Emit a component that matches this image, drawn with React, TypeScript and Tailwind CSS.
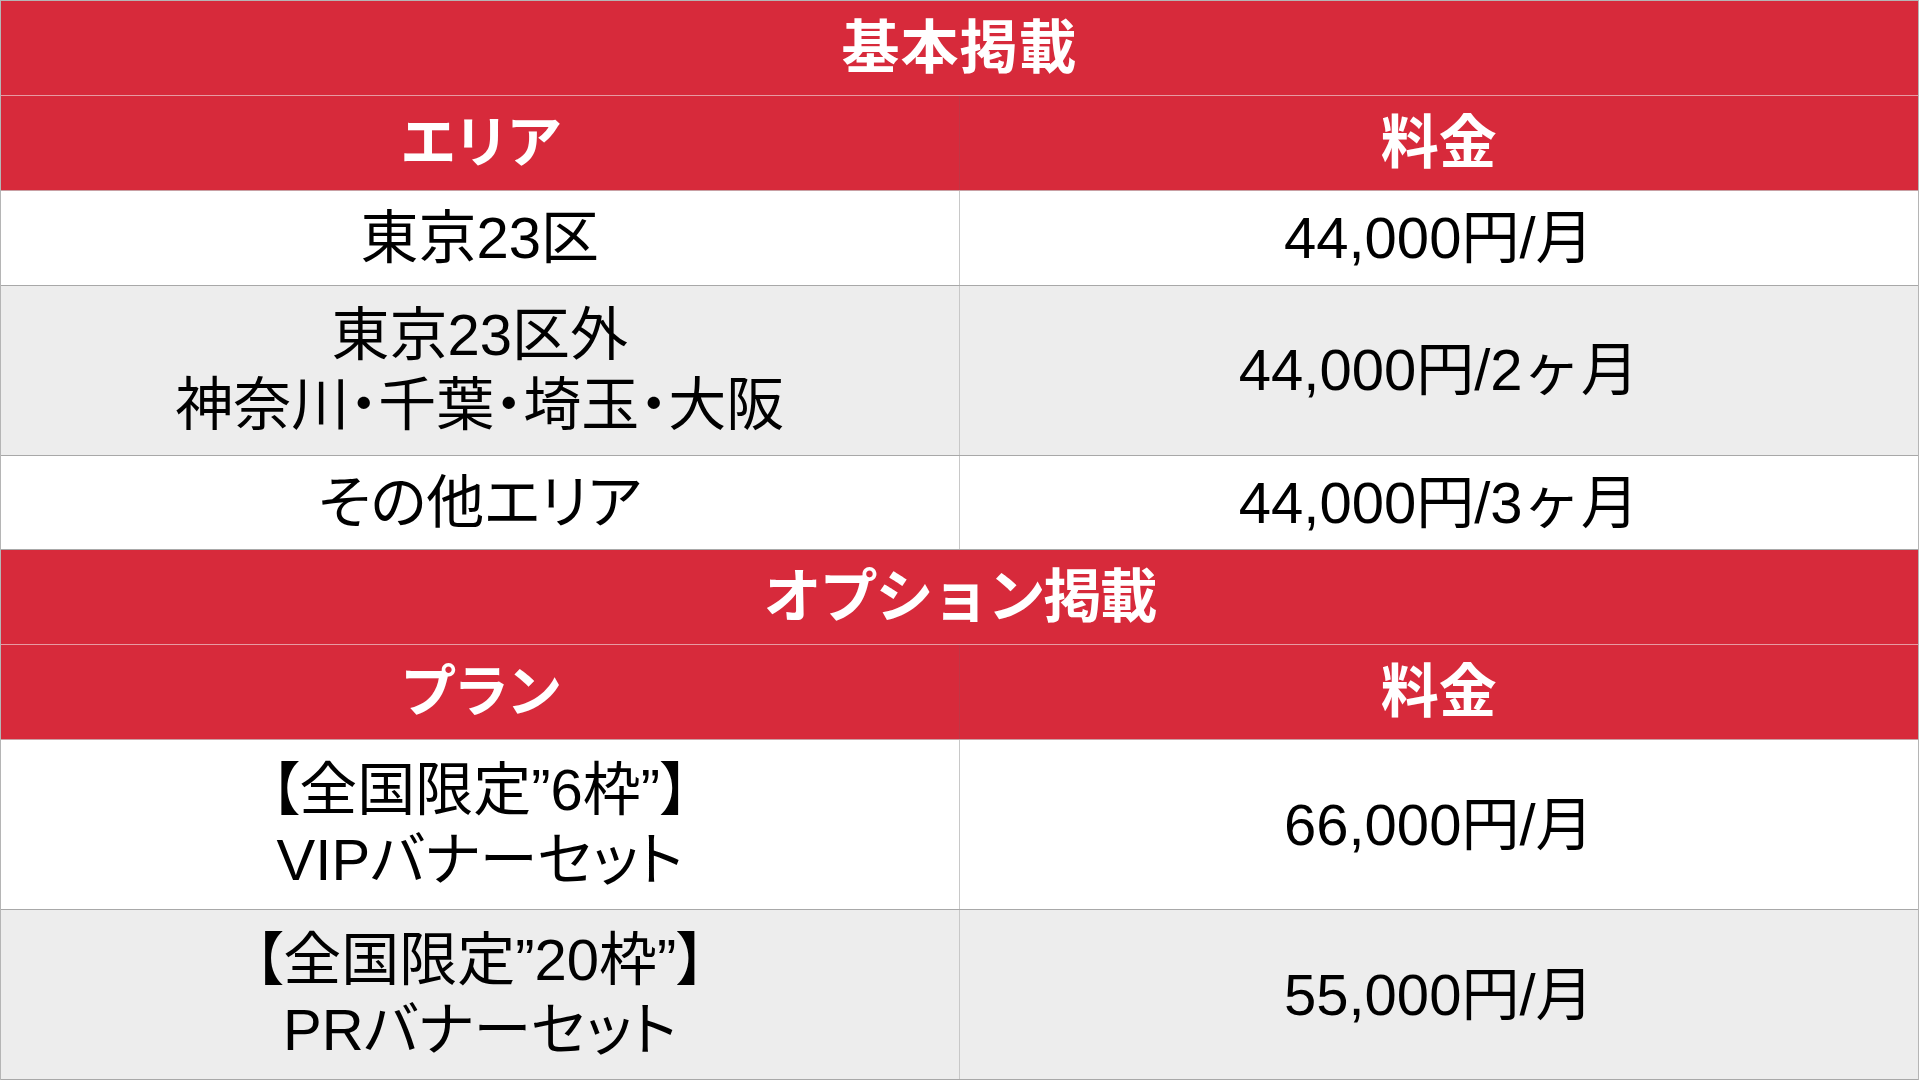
const font = "font-['Liberation_Sans','Noto_Sans_CJK_JP',sans-serif]";

type Row = { left: string[]; right: string; tall?: boolean; gray?: boolean };

const basicRows: Row[] = [
  { left: ["東京23区"], right: "44,000円/月" },
  { left: ["東京23区外", "神奈川・千葉・埼玉・大阪"], right: "44,000円/2ヶ月", tall: true, gray: true },
  { left: ["その他エリア"], right: "44,000円/3ヶ月" },
];

const optionRows: Row[] = [
  { left: ["【全国限定”6枠”】", "VIPバナーセット"], right: "66,000円/月", tall: true },
  { left: ["【全国限定”20枠”】", "PRバナーセット"], right: "55,000円/月", tall: true, gray: true },
];

function TitleRow({ label, tight }: { label: string; tight?: boolean }) {
  return (
    <div className="h-[95px] flex items-center justify-center bg-[#d72a3b] border-b border-[#e79aa2]">
      <span className={`${tight ? "tracking-[-2px]" : "tracking-[1px]"} text-[58px] font-bold text-white leading-none`}>
        {label}
      </span>
    </div>
  );
}

function HeadRow({ left }: { left: string }) {
  return (
    <div className="h-[95px] grid grid-cols-2 bg-[#d72a3b] border-b border-[#c9a0a4]">
      <div className="flex items-center justify-center border-r border-[#c23544]">
        <span className="text-[56px] font-bold text-white leading-none tracking-[-3px]">{left}</span>
      </div>
      <div className="flex items-center justify-center">
        <span className="text-[58px] font-bold text-white leading-none">料金</span>
      </div>
    </div>
  );
}

function BodyRow({ row }: { row: Row }) {
  return (
    <div
      className={`${row.tall ? "h-[170px]" : "h-[95px]"} ${row.gray ? "bg-[#ededed]" : "bg-white"} grid grid-cols-2 border-b border-[#a8a8a8] text-black`}
    >
      <div className="flex flex-col items-center justify-center border-r border-[#c8c8c8] text-[58px] leading-[70px]">
        {row.left.map((line, i) => (
          <span key={i} className="[font-feature-settings:'palt']">{line}</span>
        ))}
      </div>
      <div className="flex items-center justify-center text-[58px] leading-none">
        <span>{row.right}</span>
      </div>
    </div>
  );
}

export default function App() {
  return (
    <div className={`${font} w-full h-[1080px] overflow-hidden bg-white border-x border-[#b5b5b5] flex flex-col`}>
      <div className="border-t border-[#b5b5b5]" />
      <TitleRow label="基本掲載" />
      <HeadRow left="エリア" />
      {basicRows.map((r, i) => (
        <BodyRow key={i} row={r} />
      ))}
      <TitleRow label="オプション掲載" tight />
      <HeadRow left="プラン" />
      {optionRows.map((r, i) => (
        <BodyRow key={i} row={r} />
      ))}
    </div>
  );
}
